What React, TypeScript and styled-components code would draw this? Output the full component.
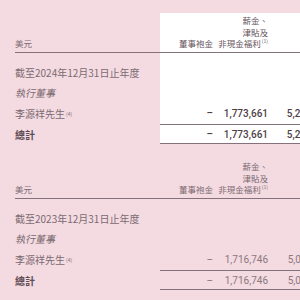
import React from 'react';
import styled, { createGlobalStyle } from 'styled-components';

const GlobalStyle = createGlobalStyle`
  html, body {
    margin: 0;
    padding: 0;
    background: #f4dae1;
  }
`;

const Page = styled.main`
  width: 300px;
  height: 300px;
  overflow: hidden;
  box-sizing: border-box;
  padding: 13px 0 0 15px;
  background: #f4dae1;
  font-family: 'Noto Sans CJK TC', 'Noto Sans', sans-serif;
  color: #7b6a72;
`;

const Table = styled.section<{ $current?: boolean }>`
  width: 316px;
  display: flex;
  flex-direction: column;
  background: ${(p) =>
    p.$current ? 'linear-gradient(to right, transparent 145px, #ffffff 145px)' : 'none'};

  & + & {
    margin-top: 15px;
  }
`;

const cols = '145px 53px 55px 63px';

const HeaderRow = styled.div`
  display: grid;
  grid-template-columns: ${cols};
  align-items: end;
  height: 40px;
  box-sizing: border-box;
  padding-bottom: 2px;
  border-bottom: 1px solid #85717b;
`;

const HeadCell = styled.div<{ $left?: boolean; $dark?: boolean }>`
  font-size: 8.5px;
  line-height: 11.6px;
  text-align: ${(p) => (p.$left ? 'left' : 'right')};
  color: ${(p) => (p.$dark ? '#65545c' : '#7b6a72')};
  white-space: nowrap;
`;

const Body = styled.div`
  display: flex;
  flex-direction: column;
  padding-top: 10px;
`;

const Row = styled.div<{ $h: number }>`
  display: grid;
  grid-template-columns: ${cols};
  height: ${(p) => p.$h}px;
`;

const Label = styled.div<{ $italic?: boolean; $bold?: boolean }>`
  display: flex;
  align-items: center;
  font-size: 10px;
  white-space: nowrap;
  font-style: ${(p) => (p.$italic ? 'italic' : 'normal')};
  font-weight: ${(p) => (p.$bold ? 700 : 400)};
  color: ${(p) => (p.$bold ? '#5e4d55' : '#7b6a72')};
  border-bottom: 1px solid transparent;
`;

const Num = styled.div<{ $ruled?: boolean; $dark?: boolean }>`
  display: flex;
  align-items: center;
  justify-content: flex-end;
  font-family: Roboto, 'Liberation Sans', sans-serif;
  font-size: 10px;
  font-weight: ${(p) => (p.$dark ? 500 : 400)};
  color: ${(p) => (p.$dark ? '#4e3f47' : '#8a7880')};
  border-bottom: 1px solid ${(p) => (p.$ruled ? '#85717b' : 'transparent')};
`;

const Sup = styled.sup`
  font-size: 5px;
  line-height: 1;
  vertical-align: 4px;
  margin-left: 1px;
`;

type YearData = {
  year: string;
  fees: string;
  salary: string;
  bonus: string;
  current?: boolean;
};

const years: YearData[] = [
  { year: '2024', fees: '–', salary: '1,773,661', bonus: '5,216,482', current: true },
  { year: '2023', fees: '–', salary: '1,716,746', bonus: '5,017,935' },
];

const YearTable: React.FC<{ data: YearData }> = ({ data }) => {
  const dark = !!data.current;
  return (
    <Table $current={data.current}>
      <HeaderRow>
        <HeadCell $left>美元</HeadCell>
        <HeadCell $dark={dark}>董事袍金</HeadCell>
        <HeadCell $dark={dark}>
          薪金、
          <br />
          津貼及
          <br />
          非現金福利<Sup>(1)</Sup>
        </HeadCell>
        <HeadCell $dark={dark}>花紅</HeadCell>
      </HeaderRow>
      <Body>
        <Row $h={20}>
          <Label>截至{data.year}年12月31日止年度</Label>
        </Row>
        <Row $h={20}>
          <Label $italic>執行董事</Label>
        </Row>
        <Row $h={22}>
          <Label>
            李源祥先生<Sup>(4)</Sup>
          </Label>
          <Num $ruled $dark={dark}>{data.fees}</Num>
          <Num $ruled $dark={dark}>{data.salary}</Num>
          <Num $ruled $dark={dark}>{data.bonus}</Num>
        </Row>
        <Row $h={19}>
          <Label $bold>總計</Label>
          <Num $ruled $dark={dark}>{data.fees}</Num>
          <Num $ruled $dark={dark}>{data.salary}</Num>
          <Num $ruled $dark={dark}>{data.bonus}</Num>
        </Row>
      </Body>
    </Table>
  );
};

export default function App() {
  return (
    <>
      <GlobalStyle />
      <Page>
        {years.map((y) => (
          <YearTable key={y.year} data={y} />
        ))}
      </Page>
    </>
  );
}
